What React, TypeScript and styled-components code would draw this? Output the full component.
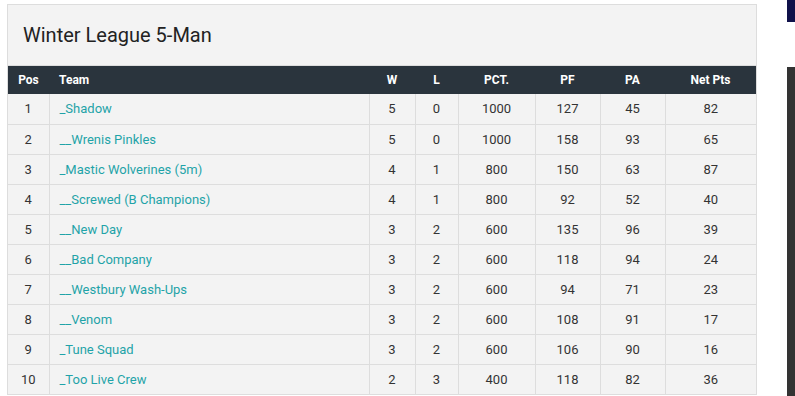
import { FC } from "react";
import styled, { createGlobalStyle } from "styled-components";

const GlobalStyle = createGlobalStyle`
  body {
    margin: 0;
    background: #fff;
    font-family: Roboto, "Liberation Sans", Arial, sans-serif;
  }
`;

const Page = styled.div`
  display: flex;
  align-items: flex-start;
  padding: 4px 0 0 7px;
  height: 396px;
  box-sizing: border-box;
  overflow: hidden;
`;

const Panel = styled.div`
  width: 750px;
  background: #f3f3f3;
  border: 1px solid #dddddd;
  border-bottom: none;
  box-sizing: border-box;
  flex-shrink: 0;
`;

const Title = styled.h2`
  margin: 0;
  height: 61px;
  padding: 0 0 0 15px;
  display: flex;
  align-items: center;
  font-size: 20px;
  font-weight: 400;
  color: #222;
  border-bottom: 1px solid #dddddd;
  box-sizing: border-box;
`;

const Table = styled.table`
  width: 100%;
  border-collapse: collapse;
  font-size: 13px;
  color: #333;
`;

const Th = styled.th<{ $align?: string; $w?: number }>`
  background: #2a343d;
  color: #fff;
  font-size: 12px;
  font-weight: 700;
  height: 28px;
  padding: 0 10px;
  text-align: ${(p) => p.$align || "center"};
  width: ${(p) => (p.$w ? `${p.$w}px` : "auto")};
  box-sizing: border-box;
`;

const Td = styled.td<{ $align?: string }>`
  height: 30px;
  padding: 0 10px;
  border: 1px solid #dddddd;
  border-top: none;
  text-align: ${(p) => p.$align || "center"};
  box-sizing: border-box;
  &:first-child {
    border-left: none;
  }
  &:last-child {
    border-right: none;
  }
`;

const TeamLink = styled.a`
  color: #1fa3a8;
  text-decoration: none;
`;

const Side = styled.div`
  margin-left: 30px;
  display: flex;
  flex-direction: column;
  gap: 45px;
  margin-top: -4px;
`;

const SideBlock = styled.div<{ $bg: string; $h: number }>`
  width: 10px;
  height: ${(p) => p.$h}px;
  background: ${(p) => p.$bg};
`;

const rows = [
  [1, "_Shadow", 5, 0, 1000, 127, 45, 82],
  [2, "__Wrenis Pinkles", 5, 0, 1000, 158, 93, 65],
  [3, "_Mastic Wolverines (5m)", 4, 1, 800, 150, 63, 87],
  [4, "__Screwed (B Champions)", 4, 1, 800, 92, 52, 40],
  [5, "__New Day", 3, 2, 600, 135, 96, 39],
  [6, "__Bad Company", 3, 2, 600, 118, 94, 24],
  [7, "__Westbury Wash-Ups", 3, 2, 600, 94, 71, 23],
  [8, "__Venom", 3, 2, 600, 108, 91, 17],
  [9, "_Tune Squad", 3, 2, 600, 106, 90, 16],
  [10, "_Too Live Crew", 2, 3, 400, 118, 82, 36],
];

const App: FC = () => {
  return (
    <>
      <GlobalStyle />
      <Page>
        <Panel>
          <Title>Winter League 5-Man</Title>
          <Table>
            <thead>
              <tr>
                <Th $w={41}>Pos</Th>
                <Th $align="left" $w={320}>Team</Th>
                <Th $w={46}>W</Th>
                <Th $w={43}>L</Th>
                <Th $w={77}>PCT.</Th>
                <Th $w={65}>PF</Th>
                <Th $w={65}>PA</Th>
                <Th>Net Pts</Th>
              </tr>
            </thead>
            <tbody>
              {rows.map((r) => (
                <tr key={r[0]}>
                  <Td>{r[0]}</Td>
                  <Td $align="left">
                    <TeamLink href="#">{r[1]}</TeamLink>
                  </Td>
                  {r.slice(2).map((v, i) => (
                    <Td key={i}>{v}</Td>
                  ))}
                </tr>
              ))}
            </tbody>
          </Table>
        </Panel>
        <Side>
          <SideBlock $bg="#10114a" $h={22} />
          <SideBlock $bg="#333333" $h={340} />
        </Side>
      </Page>
    </>
  );
};

export default App;
